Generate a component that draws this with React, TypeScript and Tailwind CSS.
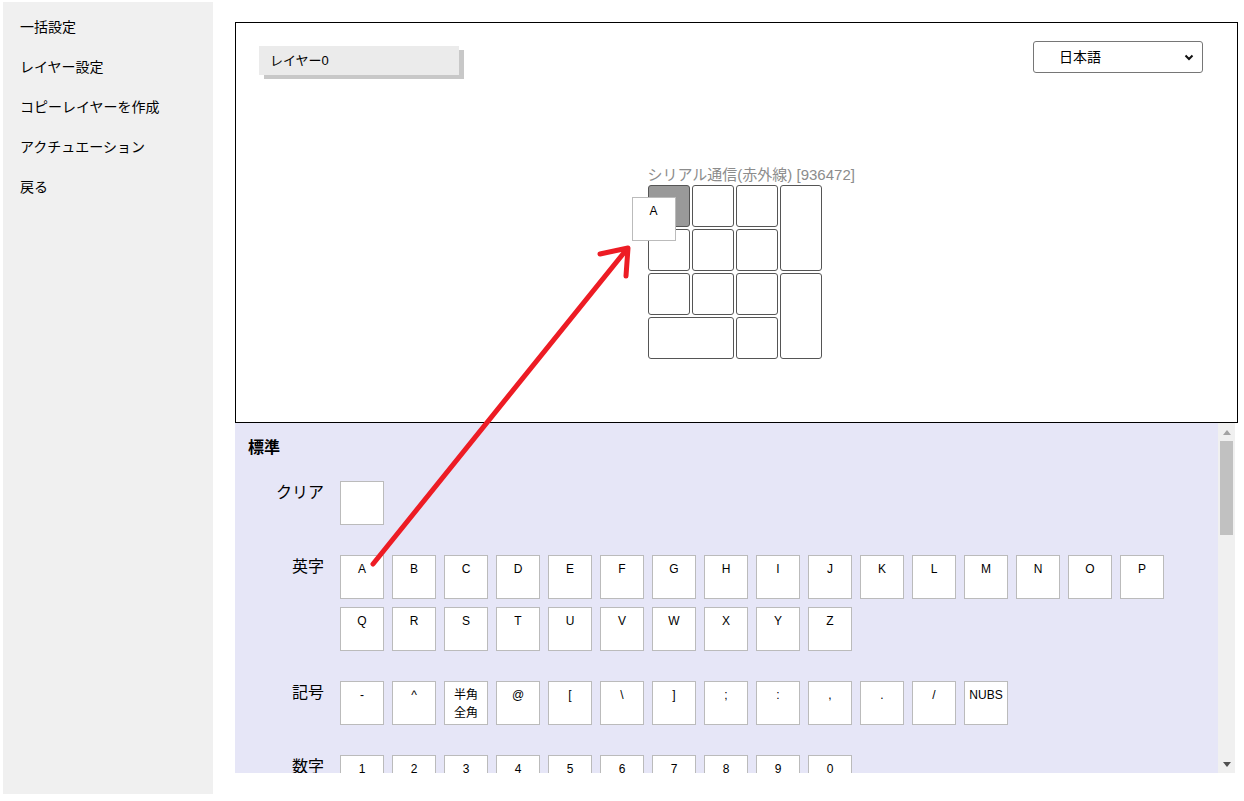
const font = "font-['Liberation_Sans','Noto_Sans_CJK_JP',sans-serif]";

const menu = ["一括設定", "レイヤー設定", "コピーレイヤーを作成", "アクチュエーション", "戻る"];

const letters1 = "ABCDEFGHIJKLMNOP".split("");
const letters2 = "QRSTUVWXYZ".split("");
const symbols = ["-", "^", "半角\n全角", "@", "[", "\\", "]", ";", ":", ",", ".", "/", "NUBS"];
const digits = "1234567890".split("");

const Key = ({ label }: { label?: string }) => (
  <div className="w-[44px] h-[44px] border border-[#bbbbbb] bg-white text-center text-[12px] leading-[18px] pt-[4px] whitespace-pre-line text-black">
    {label}
  </div>
);

const KeyRow = ({ title, keys }: { title: string; keys: string[] }) => (
  <div className="flex items-start">
    <div className="w-[76px] text-right text-[16px] leading-[22px] pt-[1px] text-black">{title}</div>
    <div className="ml-[16px] w-[840px] flex flex-wrap gap-[8px]">
      {keys.map((k, i) => (
        <Key key={i} label={k} />
      ))}
    </div>
  </div>
);

const GridKey = ({ className = "" }: { className?: string }) => (
  <div className={`border border-[#555555] rounded-[3px] ${className}`} />
);

const Keyboard = () => (
  <div className="relative w-[174px] self-center mt-[90px] mr-[4px]">
    <div className="whitespace-nowrap text-[15px] leading-[20px] text-[#8c8c8c]">シリアル通信(赤外線) [936472]</div>
    <div className="grid grid-cols-[42px_42px_42px_42px] grid-rows-[42px_42px_42px_42px] gap-[2px]">
      <GridKey className="bg-[#999999]" />
      <GridKey />
      <GridKey />
      <GridKey className="row-span-2" />
      <GridKey />
      <GridKey />
      <GridKey />
      <GridKey />
      <GridKey />
      <GridKey />
      <GridKey className="row-span-2" />
      <GridKey className="col-span-2" />
      <GridKey />
    </div>
    <div className="absolute left-[-16px] top-[32px] w-[44px] h-[44px] border border-[#bbbbbb] bg-white text-center text-[12px] leading-[18px] pt-[4px]">
      A
    </div>
  </div>
);

export default function App() {
  return (
    <div className={`relative w-[1244px] h-[801px] bg-white flex pl-[3px] pt-[2px] ${font}`}>
      <aside className="w-[210px] h-[792px] bg-[#f0f0f0] pt-[5px] pl-[17px]">
        {menu.map((m) => (
          <div key={m} className="h-10 flex items-center text-[14px] text-black">
            {m}
          </div>
        ))}
      </aside>

      <main className="ml-[22px] mt-[20px] w-[1003px] flex flex-col">
        <section className="h-[401px] border border-black flex flex-col">
          <div className="flex items-start justify-between pt-[18px] pl-[23px] pr-[34px]">
            <div className="mt-[5px] w-[200px] h-[29px] bg-[#ebebeb] shadow-[5px_4px_0_#c8c8c8] pl-[11px] text-[13px] leading-[29px] text-black">
              レイヤー0
            </div>
            <div className="w-[170px] h-[32px] border border-[#767676] rounded-[3px] flex items-center justify-between pl-[25px] pr-[8px] text-[14px] text-black">
              <span>日本語</span>
              <svg width="10" height="7" viewBox="0 0 10 7">
                <path d="M1.5 1.5 L5 5 L8.5 1.5" fill="none" stroke="#111" strokeWidth="2" />
              </svg>
            </div>
          </div>
          <Keyboard />
        </section>

        <section className="w-[1000px] h-[350px] flex bg-[#e6e6f7]">
          <div className="flex-1 overflow-hidden pl-[13px] pt-[15px]">
            <div className="text-[16px] leading-[20px] font-bold text-black">標準</div>
            <div className="mt-[23px] flex flex-col gap-[30px]">
              <KeyRow title="クリア" keys={[""]} />
              <KeyRow title="英字" keys={[...letters1, ...letters2]} />
              <KeyRow title="記号" keys={symbols} />
              <KeyRow title="数字" keys={digits} />
            </div>
          </div>
          <div className="w-[17px] h-full bg-[#f0f0f0] flex flex-col items-center">
            <div className="h-[18px] flex items-center justify-center">
              <svg width="8" height="5" viewBox="0 0 8 5">
                <path d="M0 5 L4 0 L8 5 Z" fill="#a3a3a3" />
              </svg>
            </div>
            <div className="w-[13px] h-[94px] bg-[#c1c1c1]" />
            <div className="flex-1" />
            <div className="h-[18px] flex items-center justify-center">
              <svg width="8" height="5" viewBox="0 0 8 5">
                <path d="M0 0 L8 0 L4 5 Z" fill="#505050" />
              </svg>
            </div>
          </div>
        </section>
      </main>

      <svg className="absolute inset-0 pointer-events-none" width="1244" height="801" viewBox="0 0 1244 801">
        <g fill="none" stroke="#ed1c24" strokeWidth="5" strokeLinecap="round" strokeLinejoin="round">
          <path d="M373 564 L627 249" />
          <path d="M600 254 L628 248 L626 276" />
        </g>
      </svg>
    </div>
  );
}
